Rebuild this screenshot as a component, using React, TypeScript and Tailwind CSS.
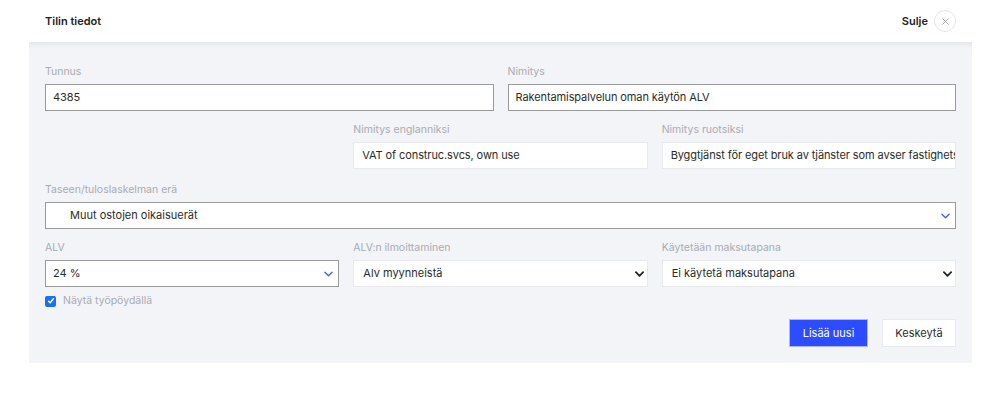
import React from 'react';

const Chevron = ({ blue }: { blue?: boolean }) => (
    <svg viewBox="0 0 10 6" className="w-[9px] h-[6px]" fill="none" stroke={blue ? '#3b5bfd' : '#222'} strokeWidth={blue ? 1.4 : 2} strokeLinecap="round" strokeLinejoin="round">
        <path d="M1 1l4 4 4-4" />
    </svg>
);

const Label = ({ children }: { children: React.ReactNode }) => (
    <div className="text-[10.5px] leading-[14px] text-[#a9abb0] mb-[5px]">{children}</div>
);

const Input = ({ value, strong }: { value: string; strong?: boolean }) => (
    <div className={`h-[27px] bg-white flex items-center text-[11px] tracking-[-0.1px] text-[#2b2b2b] overflow-hidden whitespace-nowrap ${strong ? 'border border-[#9a9a9a] px-[7px]' : 'border border-[#e8e9ec] px-[8px]'}`}>
        {value}
    </div>
);

const Select = ({ value, strong, indent }: { value: string; strong?: boolean; indent?: boolean }) => (
    <div className={`h-[27px] bg-white flex items-center justify-between text-[11px] text-[#2b2b2b] ${strong ? 'border border-[#9a9a9a] pr-[5px]' : 'border border-[#e8e9ec] pr-[3px]'} ${indent ? 'pl-[24px]' : strong ? 'pl-[7px]' : 'pl-[9px]'}`}>
        <span>{value}</span>
        <Chevron blue={strong} />
    </div>
);

export default function App() {
    return (
        <div className="w-[999px] h-[396px] bg-white font-['Inter','Liberation_Sans',sans-serif]">
            <div className="ml-[29px] w-[943px]">
                <div className="h-[42px] flex items-center justify-between px-[16px]">
                    <div className="text-[11px] font-semibold text-[#222]">Tilin tiedot</div>
                    <div className="flex items-center gap-[6px]">
                        <span className="text-[11px] font-semibold text-[#222]">Sulje</span>
                        <span className="w-[22px] h-[22px] rounded-full border border-[#e4e5e8] flex items-center justify-center">
                            <svg viewBox="0 0 10 10" className="w-[7px] h-[7px]" stroke="#9a9a9a" strokeWidth={1.2} strokeLinecap="round">
                                <path d="M1 1l8 8M9 1l-8 8" />
                            </svg>
                        </span>
                    </div>
                </div>
                <div className="bg-[#f3f4f8] h-[321px] px-[16px] pt-[23px] shadow-[inset_0_7px_6px_-5px_rgba(0,0,0,0.08)]">
                    <div className="grid grid-cols-2 gap-x-[14px]">
                        <div>
                            <Label>Tunnus</Label>
                            <Input value="4385" strong />
                        </div>
                        <div>
                            <Label>Nimitys</Label>
                            <Input value="Rakentamispalvelun oman käytön ALV" strong />
                        </div>
                    </div>
                    <div className="grid grid-cols-3 gap-x-[14px] mt-[12px]">
                        <div />
                        <div>
                            <Label>Nimitys englanniksi</Label>
                            <Input value="VAT of construc.svcs, own use" />
                        </div>
                        <div>
                            <Label>Nimitys ruotsiksi</Label>
                            <Input value="Byggtjänst för eget bruk av tjänster som avser fastighets" />
                        </div>
                    </div>
                    <div className="mt-[14px]">
                        <Label>Taseen/tuloslaskelman erä</Label>
                        <Select value="Muut ostojen oikaisuerät" strong indent />
                    </div>
                    <div className="grid grid-cols-3 gap-x-[14px] mt-[12px]">
                        <div>
                            <Label>ALV</Label>
                            <Select value="24 %" strong />
                        </div>
                        <div>
                            <Label>ALV:n ilmoittaminen</Label>
                            <Select value="Alv myynneistä" />
                        </div>
                        <div>
                            <Label>Käytetään maksutapana</Label>
                            <Select value="Ei käytetä maksutapana" />
                        </div>
                    </div>
                    <label className="flex items-center gap-[7px] mt-[7px] h-[14px]">
                        <span className="w-[11px] h-[11px] rounded-[2px] bg-[#1a6ff5] flex items-center justify-center">
                            <svg viewBox="0 0 10 10" className="w-[8px] h-[8px]" fill="none" stroke="white" strokeWidth={1.8} strokeLinecap="round" strokeLinejoin="round">
                                <path d="M2 5.2l2 2 4-5" />
                            </svg>
                        </span>
                        <span className="text-[10.5px] text-[#a9abb0]">Näytä työpöydällä</span>
                    </label>
                    <div className="flex justify-end gap-[14px] mt-[11px]">
                        <button className="h-[28px] w-[79px] bg-[#2b4cff] text-white text-[11px] border border-[#a9b6ff]">Lisää uusi</button>
                        <button className="h-[28px] w-[74px] bg-white text-[#2b2b2b] text-[11px] border border-[#e8e9ec]">Keskeytä</button>
                    </div>
                </div>
            </div>
        </div>
    );
}
